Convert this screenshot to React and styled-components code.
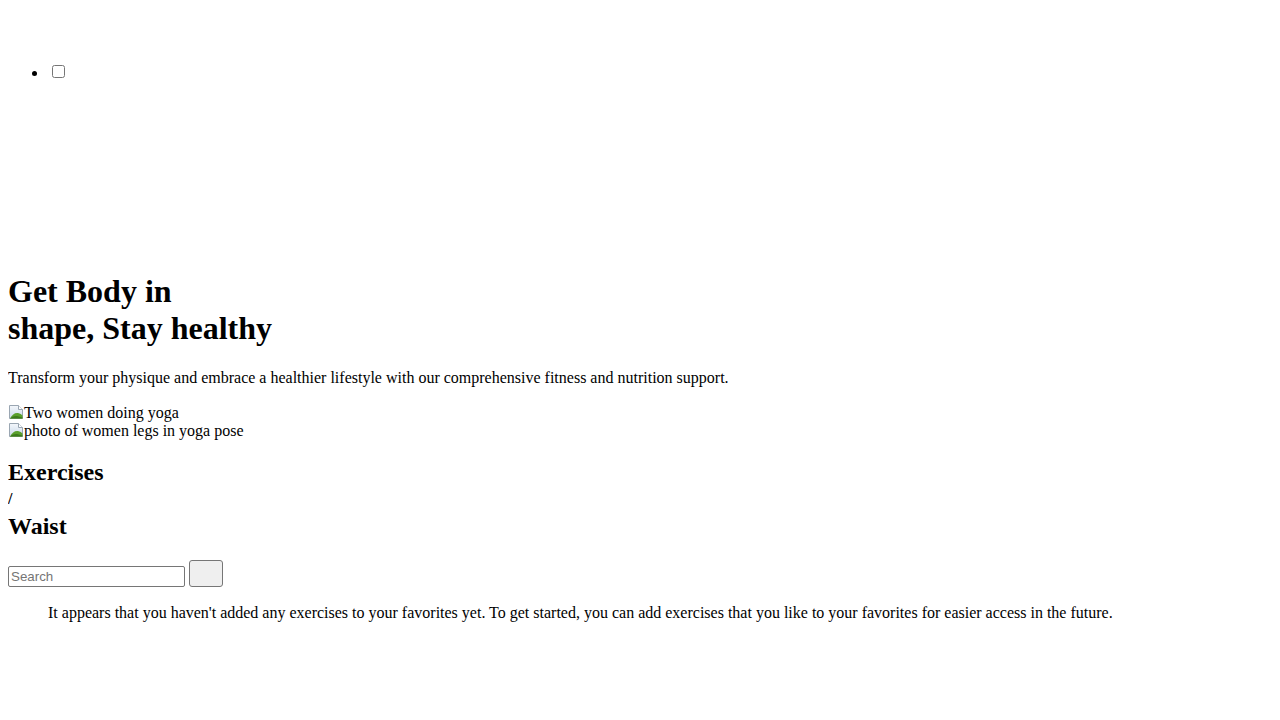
import React from 'react';
import styled, { createGlobalStyle } from 'styled-components';

const GlobalStyle = createGlobalStyle`
  body {
    margin: 8px;
    font-family: "Liberation Serif", "Times New Roman", serif;
    font-size: 16px;
    color: #000;
    background: #fff;
  }
`;

const Header = styled.header`
  display: block;
`;

const LogoSlot = styled.div`
  height: 38px;
`;

const NavList = styled.ul`
  margin: 16px 0;
  padding-left: 40px;
  list-style: disc;
`;

const NavItem = styled.li`
  line-height: normal;
`;

const MenuToggle = styled.input`
  margin: 3px 3px 3px 4px;
  width: 13px;
  height: 13px;
  vertical-align: baseline;
`;

const HeroArt = styled.div`
  height: 153.5px;
`;

const HeroTitle = styled.h1`
  font-size: 32px;
  font-weight: bold;
  margin: 21.44px 0 22.44px;
  line-height: normal;
`;

const HeroText = styled.p`
  margin: 16px 0;
`;

const Gallery = styled.div`
  padding-top: 1px;
`;

const ImageFallback = styled.div`
  display: flex;
  align-items: flex-end;
  height: 18px;
  line-height: 18px;
`;

const BrokenIcon = styled.svg`
  width: 16px;
  height: 16px;
  flex: none;
  margin-bottom: 2px;
`;

const Crumb = styled.h2`
  font-size: 24px;
  font-weight: bold;
  margin: ${(p) => p.$top}px 0 ${(p) => p.$bottom}px;
  line-height: normal;
`;

const Separator = styled.div`
  font-weight: bold;
  line-height: normal;
`;

const SearchForm = styled.form`
  display: flex;
  align-items: flex-end;
  gap: 4px;
  margin-top: 19.5px;
  padding-bottom: 1px;
`;

const SearchInput = styled.input`
  box-sizing: border-box;
  width: 177px;
  height: 21px;
  padding: 1px 2px;
  border: 1px solid #767676;
  border-radius: 2px;
  font-family: "Liberation Sans", Arial, sans-serif;
  font-size: 13.33px;
  color: #000;
  background: #fff;

  &::placeholder {
    color: #757575;
  }
`;

const SearchButton = styled.button`
  box-sizing: border-box;
  width: 34px;
  height: 27px;
  padding: 0;
  border: 1px solid #767676;
  border-radius: 3px;
  background: #efefef;
`;

const EmptyMessage = styled.p`
  margin: 16px 40px;
`;

const ImageIcon = () => (
  <BrokenIcon viewBox="0 0 16 16">
    <defs>
      <linearGradient id="sky" x1="0" y1="0" x2="0" y2="1">
        <stop offset="0" stopColor="#f4f7fb" />
        <stop offset="1" stopColor="#c9d9ea" />
      </linearGradient>
    </defs>
    <path d="M1.5 1.5h9l4 4v9h-13z" fill="url(#sky)" stroke="#9aa6b2" />
    <path d="M10.5 1.5v4h4" fill="#fff" stroke="#9aa6b2" />
    <path d="M2 14.5c2-4 5-6 8-5.5 2 .3 3.5 1.5 4.5 2.5v3z" fill="#5aa02c" />
    <path d="M2 14.5c3-3 6-3.5 12.5-1v1z" fill="#3d7a1c" />
  </BrokenIcon>
);

const App = () => {
  return (
    <>
      <GlobalStyle />
      <Header>
        <LogoSlot />
        <NavList>
          <NavItem>
            <MenuToggle type="checkbox" aria-label="menu" />
          </NavItem>
        </NavList>
        <HeroArt />
      </Header>
      <main>
        <HeroTitle>
          Get Body in
          <br />
          shape, Stay healthy
        </HeroTitle>
        <HeroText>
          Transform your physique and embrace a healthier lifestyle with our comprehensive fitness and nutrition support.
        </HeroText>
        <Gallery>
          <ImageFallback>
            <ImageIcon />
            <span>Two women doing yoga</span>
          </ImageFallback>
          <ImageFallback>
            <ImageIcon />
            <span>photo of women legs in yoga pose</span>
          </ImageFallback>
        </Gallery>
        <Crumb $top={19} $bottom={4}>Exercises</Crumb>
        <Separator>/</Separator>
        <Crumb $top={5} $bottom={0}>Waist</Crumb>
        <SearchForm onSubmit={(e) => e.preventDefault()}>
          <SearchInput type="text" placeholder="Search" />
          <SearchButton type="submit" aria-label="search" />
        </SearchForm>
        <EmptyMessage>
          It appears that you haven't added any exercises to your favorites yet. To get started, you can add exercises that you like to your favorites for easier access in the future.
        </EmptyMessage>
      </main>
    </>
  );
};

export default App;
